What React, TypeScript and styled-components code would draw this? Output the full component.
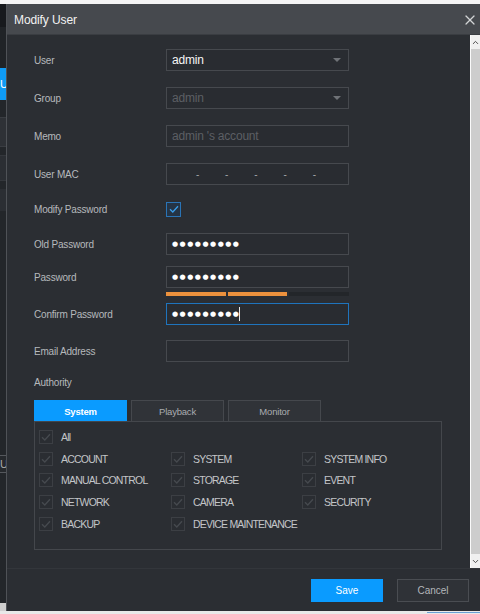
import React from "react";
import styled, { createGlobalStyle } from "styled-components";
import { ChevronDown, ChevronUp, X } from "lucide-react";

const GlobalStyle = createGlobalStyle`
  html, body {
    margin: 0;
    padding: 0;
    background: #f2f2f2;
  }
  body {
    font-family: "Liberation Sans", Arial, sans-serif;
  }
`;

const Screen = styled.div`
  width: 480px;
  height: 614px;
  overflow: hidden;
  display: flex;
  flex-direction: column;
  background: #f3f3f3;
`;

const TopStrip = styled.div`
  height: 4px;
  flex-shrink: 0;
  background: #f5f5f5;
`;

const Stage = styled.div`
  display: flex;
  height: 607px;
  flex-shrink: 0;
`;

const BottomStrip = styled.div`
  flex: 1;
  display: flex;
  justify-content: flex-end;
  align-items: center;
  background: #e9e9e9;
`;

const BottomAccent = styled.div`
  width: 53px;
  height: 1px;
  background: #6a9fd4;
`;

/* page behind the dialog */
const BackPage = styled.div`
  width: 6px;
  display: flex;
  flex-direction: column;
  background: #23262a;
  overflow: hidden;
`;

const BackBlock = styled.div<{ $h: number; $bg: string; $border?: string }>`
  height: ${({ $h }) => $h}px;
  flex-shrink: 0;
  background: ${({ $bg }) => $bg};
  border-top: ${({ $border }) => ($border ? `1px solid ${$border}` : "none")};
  border-bottom: ${({ $border }) => ($border ? `1px solid ${$border}` : "none")};
  color: #ffffff;
  font-size: 11px;
  line-height: ${({ $h }) => $h}px;
  white-space: nowrap;
`;

const Dialog = styled.div`
  flex: 1;
  display: flex;
  flex-direction: column;
  background: #2b2e33;
  border-left: 1px solid #4f5257;
`;

const Header = styled.div`
  height: 31px;
  flex-shrink: 0;
  display: flex;
  align-items: center;
  justify-content: space-between;
  padding: 1px 2px 0 7px;
  background: #46494e;
  border-bottom: 1px solid #3a3d42;
  box-sizing: border-box;
`;

const Title = styled.div`
  color: #f2f2f2;
  font-size: 12px;
  letter-spacing: -0.1px;
`;

const CloseButton = styled.div`
  display: flex;
  color: #d2d4d6;
`;

const Main = styled.div`
  height: 533px;
  flex-shrink: 0;
  display: flex;
`;

const Content = styled.div`
  flex: 1;
  padding: 14px 0 0 27px;
`;

const Row = styled.div<{ $gap: number }>`
  display: flex;
  align-items: flex-start;
  margin-top: ${({ $gap }) => $gap}px;
  min-height: 14px;
`;

const Label = styled.div<{ $h?: number }>`
  width: 132px;
  height: ${({ $h }) => $h ?? 22}px;
  flex-shrink: 0;
  display: flex;
  align-items: center;
  color: #b6b9bd;
  font-size: 10px;
  letter-spacing: -0.2px;
`;

const FieldColumn = styled.div`
  display: flex;
  flex-direction: column;
`;

const Field = styled.div<{ $focused?: boolean }>`
  width: 183px;
  height: 22px;
  box-sizing: border-box;
  display: flex;
  align-items: center;
  justify-content: space-between;
  padding: 0 7px 0 5px;
  background: #292c31;
  border: 1px solid ${({ $focused }) => ($focused ? "#1f74bd" : "#46494e")};
  font-size: 12px;
  color: #f5f5f5;
`;

const FieldText = styled.span<{ $muted?: boolean }>`
  color: ${({ $muted }) => ($muted ? "#5c5f64" : "#f5f5f5")};
  letter-spacing: -0.2px;
`;

const SelectArrow = styled.span`
  width: 0;
  height: 0;
  border-left: 4px solid transparent;
  border-right: 4px solid transparent;
  border-top: 4px solid #6f7277;
`;

const MacField = styled.div`
  width: 183px;
  height: 22px;
  box-sizing: border-box;
  display: flex;
  align-items: center;
  padding-left: 16px;
  background: #292c31;
  border: 1px solid #46494e;
`;

const MacCell = styled.span`
  width: 29.2px;
  text-align: center;
  color: #a3a6aa;
  font-size: 10px;
`;

const Dots = styled.span`
  display: flex;
  align-items: center;
  font-family: "DejaVu Sans", sans-serif;
  font-size: 7px;
  letter-spacing: 1.5px;
  color: #ffffff;
`;

const Caret = styled.span`
  width: 1px;
  height: 14px;
  margin-left: -1px;
  background: #e8e8e8;
`;

const PasswordValue = styled.div`
  display: flex;
  align-items: center;
`;

const CheckCell = styled.div`
  height: 22px;
  display: flex;
  align-items: center;
`;

const CheckBox = styled.div<{ $active?: boolean; $size: number }>`
  width: ${({ $size }) => $size}px;
  height: ${({ $size }) => $size}px;
  box-sizing: border-box;
  flex-shrink: 0;
  display: flex;
  align-items: center;
  justify-content: center;
  border: 1px solid ${({ $active }) => ($active ? "#2a74b6" : "#3c3f44")};
  background: ${({ $active }) => ($active ? "#253445" : "#2a2d32")};
`;

const Strength = styled.div`
  display: flex;
  gap: 2px;
  width: 183px;
  height: 4px;
  margin-top: 4px;
`;

const StrengthSegment = styled.div<{ $on?: boolean }>`
  flex: 1;
  background: ${({ $on }) => ($on ? "#ec913d" : "#23262a")};
`;

const Tabs = styled.div`
  display: flex;
  gap: 4px;
  margin-top: 11px;
  height: 21px;
`;

const Tab = styled.div<{ $active?: boolean }>`
  width: 93px;
  box-sizing: border-box;
  display: flex;
  align-items: center;
  justify-content: center;
  font-size: 9.5px;
  letter-spacing: -0.2px;
  font-weight: ${({ $active }) => ($active ? "bold" : "normal")};
  color: ${({ $active }) => ($active ? "#ffffff" : "#a9acb0")};
  background: ${({ $active }) => ($active ? "#0a9bff" : "#303338")};
  border: 1px solid ${({ $active }) => ($active ? "#0a9bff" : "#45484d")};
  border-bottom: none;
`;

const Panel = styled.div`
  width: 408px;
  height: 129px;
  box-sizing: border-box;
  border: 1px solid #44474c;
  padding: 4px 0 0 4px;
  display: grid;
  grid-template-columns: 132px 131px 1fr;
  grid-auto-rows: 21.8px;
`;

const Item = styled.div<{ $wide?: boolean }>`
  display: flex;
  align-items: center;
  gap: 8px;
  grid-column: ${({ $wide }) => ($wide ? "1 / -1" : "auto")};
  color: #c3c5c8;
  font-size: 10.5px;
  letter-spacing: -0.8px;
  white-space: nowrap;
`;

const Scrollbar = styled.div`
  width: 9px;
  flex-shrink: 0;
  display: flex;
  flex-direction: column;
  background: #f0f0f0;
  border-left: 1px solid #fafafa;
`;

const ScrollArrow = styled.div`
  height: 14px;
  display: flex;
  align-items: center;
  justify-content: center;
  color: #4c4c4c;
`;

const ScrollThumb = styled.div`
  flex: 1;
  background: #cdcdcd;
`;

const Footer = styled.div`
  flex: 1;
  display: flex;
  justify-content: flex-end;
  align-items: flex-start;
  gap: 14px;
  padding: 10px 11px 0 0;
  border-top: 1px solid #33363b;
`;

const Button = styled.div<{ $primary?: boolean }>`
  width: 72px;
  height: 23px;
  box-sizing: border-box;
  display: flex;
  align-items: center;
  justify-content: center;
  font-size: 10px;
  color: ${({ $primary }) => ($primary ? "#ffffff" : "#b3b6ba")};
  background: ${({ $primary }) => ($primary ? "#0a9bff" : "#2f3237")};
  border: 1px solid ${({ $primary }) => ($primary ? "#0a9bff" : "#4a4d52")};
`;

const Tick = ({ color }: { color: string }) => (
  <svg width="10" height="8" viewBox="0 0 10 8">
    <path d="M1 4.2 L3.8 7 L9 1.2" fill="none" stroke={color} strokeWidth="1.3" />
  </svg>
);

const permissions = [
  "ACCOUNT",
  "SYSTEM",
  "SYSTEM INFO",
  "MANUAL CONTROL",
  "STORAGE",
  "EVENT",
  "NETWORK",
  "CAMERA",
  "SECURITY",
  "BACKUP",
  "DEVICE MAINTENANCE",
];

const PasswordField: React.FC<{ focused?: boolean }> = ({ focused }) => (
  <Field $focused={focused}>
    <PasswordValue>
      <Dots>●●●●●●●●●</Dots>
      {focused && <Caret />}
    </PasswordValue>
  </Field>
);

const App: React.FC = () => (
  <>
    <GlobalStyle />
    <Screen>
      <TopStrip />
      <Stage>
        <BackPage>
          <BackBlock $h={23} $bg="#17191d" />
          <BackBlock $h={41} $bg="#202327" />
          <BackBlock $h={32} $bg="#0f9bf5">U</BackBlock>
          <BackBlock $h={17} $bg="#23262a" />
          <BackBlock $h={28} $bg="#2e3136" $border="#3a3d42" />
          <BackBlock $h={8} $bg="#23262a" />
          <BackBlock $h={24} $bg="#2b2e33" $border="#34373c" />
          <BackBlock $h={8} $bg="#23262a" />
          <BackBlock $h={22} $bg="#2b2e33" />
          <BackBlock $h={244} $bg="#23262a" />
          <BackBlock $h={16} $bg="#26292d" $border="#55585d">
            <span style={{ color: "#a8a8a8" }}>U</span>
          </BackBlock>
          <BackBlock $h={130} $bg="#23262a" />
          <BackBlock $h={11} $bg="#cfcfcf" />
        </BackPage>
        <Dialog>
          <Header>
            <Title>Modify User</Title>
            <CloseButton>
              <X size={16} strokeWidth={1.8} />
            </CloseButton>
          </Header>
          <Main>
            <Content>
              <Row $gap={0}>
                <Label>User</Label>
                <Field>
                  <FieldText>admin</FieldText>
                  <SelectArrow />
                </Field>
              </Row>
              <Row $gap={16}>
                <Label>Group</Label>
                <Field>
                  <FieldText $muted>admin</FieldText>
                  <SelectArrow />
                </Field>
              </Row>
              <Row $gap={16}>
                <Label>Memo</Label>
                <Field>
                  <FieldText $muted>admin 's account</FieldText>
                </Field>
              </Row>
              <Row $gap={16}>
                <Label>User MAC</Label>
                <MacField>
                  {[0, 1, 2, 3, 4].map((i) => (
                    <MacCell key={i}>-</MacCell>
                  ))}
                </MacField>
              </Row>
              <Row $gap={13}>
                <Label>Modify Password</Label>
                <CheckCell>
                  <CheckBox $active $size={15}>
                    <Tick color="#3b9eea" />
                  </CheckBox>
                </CheckCell>
              </Row>
              <Row $gap={13}>
                <Label>Old Password</Label>
                <PasswordField />
              </Row>
              <Row $gap={11}>
                <Label>Password</Label>
                <FieldColumn>
                  <PasswordField />
                  <Strength>
                    <StrengthSegment $on />
                    <StrengthSegment $on />
                    <StrengthSegment />
                  </Strength>
                </FieldColumn>
              </Row>
              <Row $gap={7}>
                <Label>Confirm Password</Label>
                <PasswordField focused />
              </Row>
              <Row $gap={15}>
                <Label>Email Address</Label>
                <Field />
              </Row>
              <Row $gap={13}>
                <Label $h={14}>Authority</Label>
              </Row>
              <Tabs>
                <Tab $active>System</Tab>
                <Tab>Playback</Tab>
                <Tab>Monitor</Tab>
              </Tabs>
              <Panel>
                <Item $wide>
                  <CheckBox $size={14}>
                    <Tick color="#464a4f" />
                  </CheckBox>
                  All
                </Item>
                {permissions.map((name) => (
                  <Item key={name}>
                    <CheckBox $size={14}>
                      <Tick color="#464a4f" />
                    </CheckBox>
                    {name}
                  </Item>
                ))}
              </Panel>
            </Content>
            <Scrollbar>
              <ScrollArrow>
                <ChevronUp size={9} strokeWidth={2.6} />
              </ScrollArrow>
              <ScrollThumb />
              <ScrollArrow>
                <ChevronDown size={9} strokeWidth={2.6} />
              </ScrollArrow>
            </Scrollbar>
          </Main>
          <Footer>
            <Button $primary>Save</Button>
            <Button>Cancel</Button>
          </Footer>
        </Dialog>
      </Stage>
      <BottomStrip>
        <BottomAccent />
      </BottomStrip>
    </Screen>
  </>
);

export default App;
